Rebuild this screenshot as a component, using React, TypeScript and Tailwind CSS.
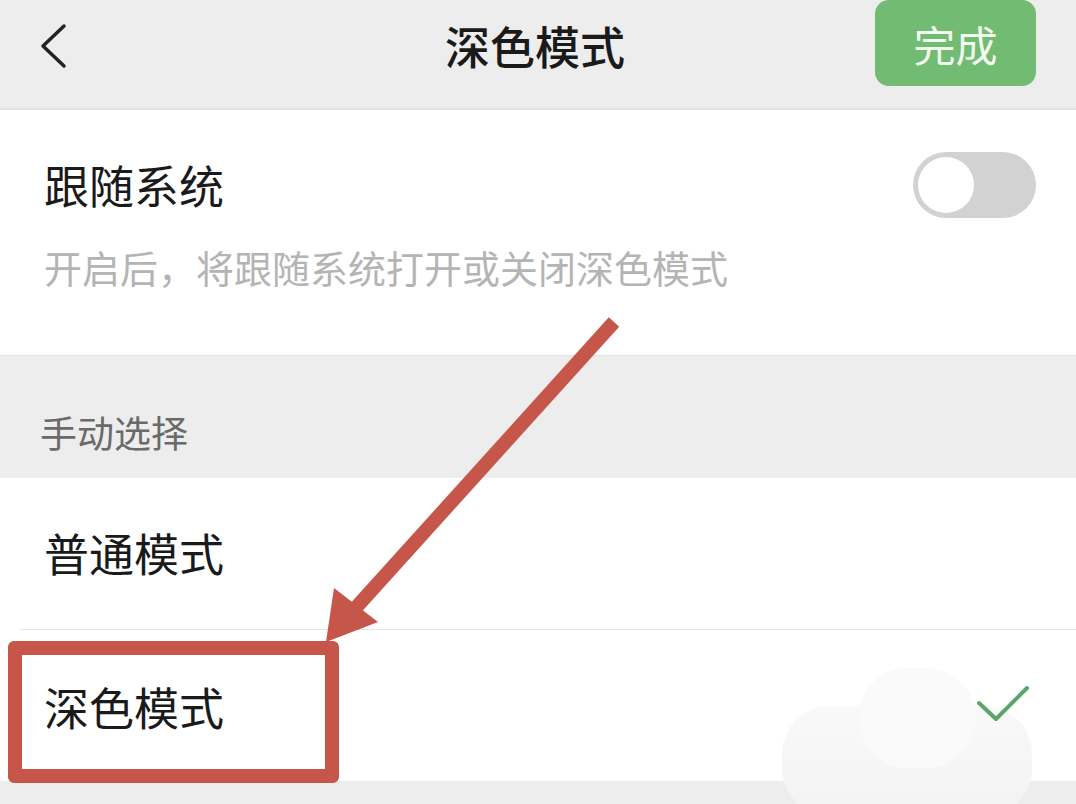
import React from 'react';

const font = { fontFamily: '"Noto Sans CJK SC", "Noto Sans", sans-serif' };

function Toggle() {
  return (
    <div className="w-[123px] h-[66px] rounded-full bg-[#d2d2d2] p-[5px] flex items-center">
      <div className="w-[56px] h-[56px] rounded-full bg-white" />
    </div>
  );
}

function Check() {
  return (
    <svg width="54" height="40" viewBox="0 0 54 40" fill="none">
      <path d="M3 18 L20 34 L51 3" stroke="#5ba56b" strokeWidth="4" strokeLinecap="round" strokeLinejoin="round" />
    </svg>
  );
}

export default function App() {
  return (
    <div className="relative w-[1076px] h-[804px] overflow-hidden bg-[#ededed] text-[#1a1a1a]" style={font}>
      {/* nav bar */}
      <div className="h-[110px] grid grid-cols-[201px_1fr_201px] items-center bg-[#ededed] border-b-2 border-[#e3e3e3]">
        <div className="pl-[38px] -mt-[16px]">
          <svg width="30" height="46" viewBox="0 0 30 46" fill="none">
            <path d="M26 3 L5 23 L26 43" stroke="#222" strokeWidth="3.5" strokeLinecap="round" strokeLinejoin="round" />
          </svg>
        </div>
        <div className="text-center text-[45px] font-medium -mt-[16px] pr-[6px]">深色模式</div>
        <div className="-mt-[22px] w-[161px] h-[86px] rounded-[14px] bg-[#71bc72] flex items-center justify-center text-[42px] text-[#f4fbf0]">
          完成
        </div>
      </div>

      {/* follow system */}
      <div className="h-[245px] bg-white px-[44px] pr-[40px] pt-[42px]">
        <div className="flex items-center justify-between">
          <div className="text-[45px] leading-[60px]">跟随系统</div>
          <Toggle />
        </div>
        <div className="mt-[24px] text-[38px] leading-[50px] text-[#b4b4b4]">开启后，将跟随系统打开或关闭深色模式</div>
      </div>

      {/* section label */}
      <div className="h-[123px] border-t border-[#e2e2e2] px-[40px] flex items-end pb-[18px]">
        <div className="text-[37px] text-[#6a6a6a]">手动选择</div>
      </div>

      {/* options */}
      <div className="bg-white">
        <div className="h-[151px] flex items-center px-[44px]">
          <div className="text-[45px] pb-[2px]">普通模式</div>
        </div>
        <div className="ml-[20px] h-px bg-[#e6e6e6]" />
        <div className="h-[151px] flex items-center justify-between px-[44px] pr-[46px]">
          <div className="text-[45px] pt-[2px]">深色模式</div>
        </div>
      </div>

      {/* watermark blob */}
      <div className="absolute left-[782px] top-[706px] w-[250px] h-[110px] rounded-[48px] bg-gradient-to-b from-[#f9f9f9] to-[#f3f3f3]" />
      <div className="absolute left-[858px] top-[668px] w-[118px] h-[100px] rounded-[50px] bg-[#fafafa]" />

      {/* selected check sits above blob */}
      <div className="absolute left-[976px] top-[685px]">
        <Check />
      </div>

      {/* annotation */}
      <div className="absolute left-[8px] top-[641px] w-[331px] h-[142px] rounded-[6px] border-[14px] border-[#c6564a]" />
      <svg className="absolute left-0 top-0 pointer-events-none" width="1076" height="804" viewBox="0 0 1076 804">
        <line x1="614" y1="322" x2="352" y2="612" stroke="#c6564a" strokeWidth="14" />
        <polygon points="326,642 334,588 378,622" fill="#c6564a" />
      </svg>
    </div>
  );
}
